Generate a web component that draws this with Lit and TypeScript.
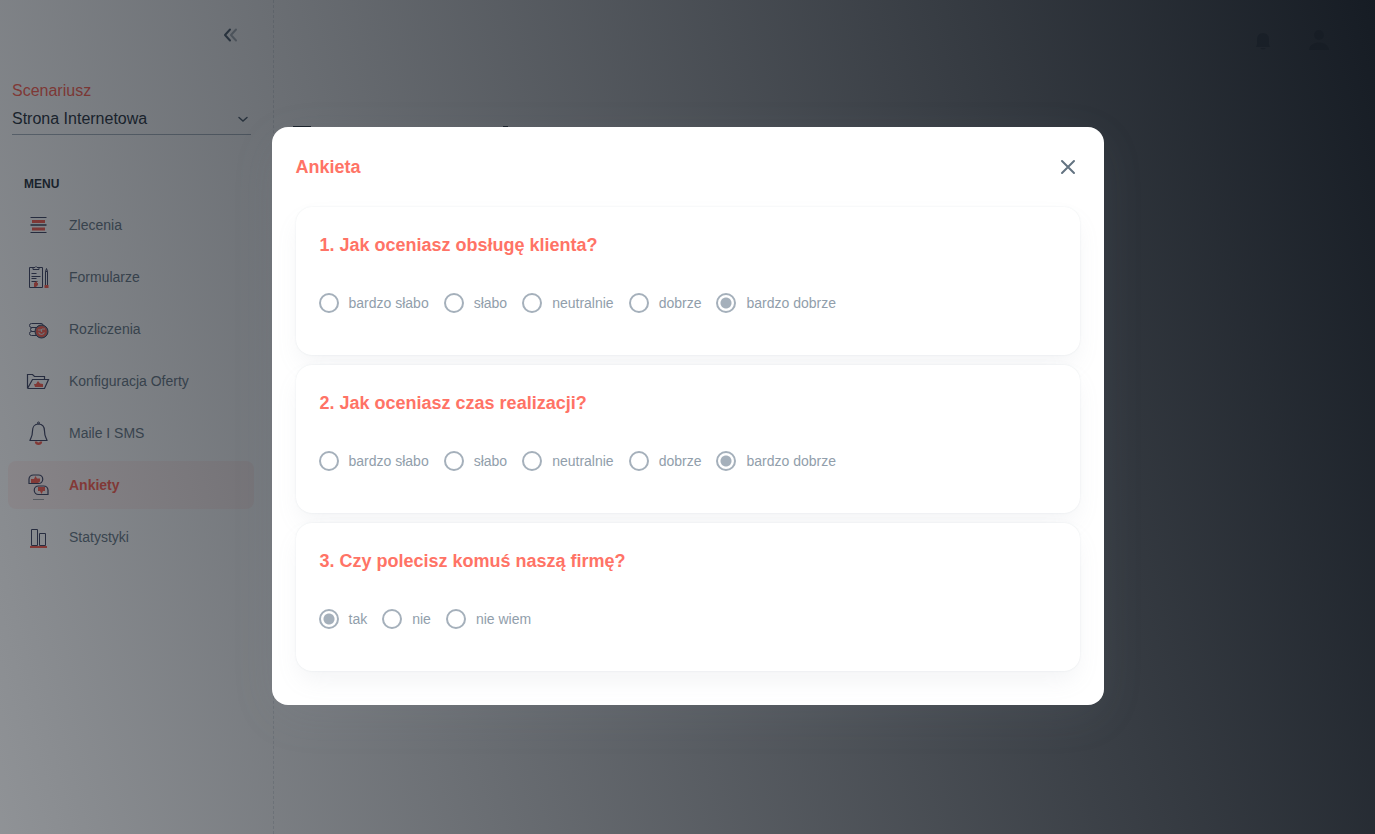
import { LitElement, html, svg, css } from "lit";
import { customElement, state } from "lit/decorators.js";
import { classMap } from "lit/directives/class-map.js";

const INK = "#3a3f5e";
const RED = "#f9594a";

const icons = {
  orders: svg`<g fill="none"><path stroke="${INK}" d="M4.500 4.500h16M4.500 19.500h16" /><path stroke="#697080" stroke-width="2" d="M4.500 12h16" /><path stroke="${RED}" stroke-width="3" d="M6 8.500h13M6 16h13" /></g>`,
  forms: svg`<g fill="none" stroke="${INK}"><path d="M8 2.500H3.500v20h13v-20H12M7 4.500h6v-2h-2l-1-1-1 1H7zM5.500 8.500h5M5.500 11.500h9M5.500 13.500h5M5.500 16.500h6" /><path d="M19.500 20V6.500l1-3 1 3V20M19.500 6.500h2" /><path fill="${RED}" stroke="none" d="M18.500 20h4v3h-4zM8 18l3-2v2h1v2l-2 2H8z" /></g>`,
  billing: svg`<g fill="none" stroke="${INK}"><path d="M15 6.500H5.500a1.800 1.800 0 0 0 0 4H10M10 10.500H6.500a2 2 0 0 0 0 4h3M9 14.500H5.500a2 2 0 0 0 0 4H11M15 6.500q2 0 2 1.500" /><circle cx="15.500" cy="14.500" r="6.500" fill="#7b7f86" /><circle cx="15.500" cy="14.500" r="5.500" fill="${RED}" stroke="none" /></g><g fill="none" stroke="#d8dadd" stroke-width="1.200"><path d="M12 13h3M16 12h3M12.500 15.500q3 4 6 0M15.500 12v3" /></g>`,
  offer: svg`<g fill="none" stroke="${INK}" stroke-width="1.200"><path d="M1.500 19.500v-14h5l2 2h10v3M1.500 19.500h17l4-9H6.500l-5 9" /><path fill="${RED}" stroke="none" d="M8 15h2l2-3 2 2.500 3 .5v3H9z" /></g>`,
  bell: svg`<path fill="none" stroke="${INK}" stroke-width="1.200" d="M12.500 3c-4 0-6 3-6 7 0 6-2 7-2.500 9.500h17c-.5-2.500-2.500-3.500-2.500-9.500 0-4-2-7-6-7z" /><circle cx="12.500" cy="2" r="1" fill="none" stroke="${INK}" /><path d="M10 20.500c0 3 5 3 5 0" fill="none" stroke="${RED}" stroke-width="2.400" />`,
  survey: svg`<g fill="none" stroke="${INK}" stroke-width="1.200"><path d="M3 10.500V6a4.500 4.500 0 0 1 4.500-4h5a4.200 4.200 0 0 1 0 8.500zM22 21.500V17a4.500 4.500 0 0 0-4.500-4h-5a4.200 4.200 0 0 0 0 8.500z" /></g><g fill="${RED}"><path d="M5 6h3l1.500-3L11 5.500h3v3L12 10H5zM12 14h7v4h-2l-1.500 3-1.500-3h-2z" /></g><path d="M7 26.500h11" stroke="#9a9ea2" />`,
  stats: svg`<g fill="none" stroke="${INK}"><path d="M5.500 20.500v-16h6v16zM13.500 20.500v-12h6v12z" /><path stroke="${RED}" stroke-width="2" d="M4 22h17" /></g>`,
};

const menu = [
  { label: "Zlecenia", icon: icons.orders },
  { label: "Formularze", icon: icons.forms },
  { label: "Rozliczenia", icon: icons.billing },
  { label: "Konfiguracja Oferty", icon: icons.offer },
  { label: "Maile I SMS", icon: icons.bell },
  { label: "Ankiety", icon: icons.survey, active: true },
  { label: "Statystyki", icon: icons.stats },
];

const scale = ["bardzo słabo", "słabo", "neutralnie", "dobrze", "bardzo dobrze"];

@customElement("side-nav")
class SideNav extends LitElement {
  static styles = css`
    :host { display: block; box-sizing: border-box; width: 274px; border-right: 1px dashed rgba(145, 158, 171, 0.3); }
    .top { display: flex; justify-content: flex-end; padding: 23px 30px 0 0; }
    .collapse { display: flex; padding: 0; border: 0; background: none; color: #475767; cursor: pointer; }
    .scenario { display: flex; flex-direction: column; margin: 32px 22px 0 12px; font-size: 16px; }
    .caption { color: #ff5b4c; line-height: 24px; }
    .field { display: grid; align-items: center; height: 30px; padding-bottom: 1px; border-bottom: 1px solid #a3afba; }
    .field > * { grid-area: 1 / 1; }
    .select { appearance: none; width: 100%; padding: 0; border: 0; background: none; color: #212b36; font: inherit; }
    .arrow { justify-self: end; pointer-events: none; color: #475767; }
    .heading { margin: 39px 24px 7px; font-size: 12px; line-height: 20px; font-weight: 700; color: #212b36; }
    .list { display: flex; flex-direction: column; gap: 4px; margin: 0; padding: 0 19px 0 8px; list-style: none; }
    .item { display: flex; align-items: center; gap: 18px; height: 48px; padding-left: 18px; border-radius: 8px; color: #637381; font-size: 14px; text-decoration: none; }
    .item.active { background: rgba(255, 91, 76, 0.08); color: #ff5b4c; font-weight: 700; }
    .icon { overflow: visible; }
  `;
  render() {
    return html`
      <div class="top">
        <button class="collapse" aria-label="Zwiń menu">
          <svg width="24" height="24" viewBox="0 0 24 24" fill="none" stroke="currentColor" stroke-width="2" stroke-linecap="round" stroke-linejoin="round"><path d="M11 6.500 6 12l5 5.500" /><path opacity=".48" d="M17 6.500 12 12l5 5.500" /></svg>
        </button>
      </div>
      <div class="scenario">
        <label class="caption" for="scenario">Scenariusz</label>
        <div class="field">
          <select class="select" id="scenario"><option>Strona Internetowa</option></select>
          <svg class="arrow" width="16" height="16" viewBox="0 0 16 16" fill="none" stroke="currentColor" stroke-width="1.500" stroke-linecap="round"><path d="m4 7.500 4 3.500 4-3.500" /></svg>
        </div>
      </div>
      <nav>
        <div class="heading">MENU</div>
        <ul class="list">
          ${menu.map((m) => html`<li><a href="#" class=${classMap({ item: true, active: !!m.active })}><svg class="icon" width="25" height="24" viewBox="0 0 25 24">${m.icon}</svg>${m.label}</a></li>`)}
        </ul>
      </nav>
    `;
  }
}

@customElement("survey-question")
class SurveyQuestion extends LitElement {
  static properties = { text: {}, options: { attribute: false }, selected: {}, group: {} };
  declare text: string;
  declare options: string[];
  declare selected: string;
  declare group: string;
  static styles = css`
    :host { display: block; }
    .card { padding: 24px 23px 40px; border-radius: 16px; background: #fff; box-shadow: 0 0 2px rgba(145, 158, 171, 0.2), 0 12px 24px -4px rgba(145, 158, 171, 0.12); }
    .title { margin: 0 1px; font-size: 18px; line-height: 28px; font-weight: 700; color: #ff7366; }
    .options { display: flex; flex-wrap: wrap; gap: 15px; margin-top: 32px; }
    .option { display: flex; align-items: center; gap: 10px; height: 24px; font-size: 14px; color: #919eab; }
    .radio { appearance: none; box-sizing: border-box; width: 20px; height: 20px; margin: 0; border: 2px solid #a5b0bb; border-radius: 50%; }
    .radio:checked { background: radial-gradient(circle, #a5b0bb 5px, transparent 6px); }
  `;
  render() {
    return html`
      <section class="card" role="radiogroup" aria-labelledby="title">
        <h3 class="title" id="title">${this.text}</h3>
        <div class="options">
          ${this.options.map((o) => html`<label class="option"><input class="radio" type="radio" name=${this.group} .checked=${o === this.selected} />${o}</label>`)}
        </div>
      </section>
    `;
  }
}

@customElement("app-root")
class AppRoot extends LitElement {
  @state() private questions = [
    { text: "1. Jak oceniasz obsługę klienta?", options: scale, selected: "bardzo dobrze" },
    { text: "2. Jak oceniasz czas realizacji?", options: scale, selected: "bardzo dobrze" },
    { text: "3. Czy polecisz komuś naszą firmę?", options: ["tak", "nie", "nie wiem"], selected: "tak" },
  ];
  static styles = css`
    :host { display: grid; min-height: 100vh; background: #fff; font-family: "Liberation Sans", Arial, sans-serif; }
    .page, .backdrop { grid-area: 1 / 1; }
    .page { display: flex; }
    .main { flex: 1; }
    .header { display: flex; justify-content: flex-end; align-items: center; gap: 26px; padding: 20px 36px 0 0; color: #637381; }
    .marks { display: block; margin: 66px 0 0 19px; }
    .backdrop { z-index: 1; display: flex; align-items: center; justify-content: center; background: linear-gradient(75deg, rgba(22, 28, 36, 0.48), #161c24); }
    .dialog { box-sizing: border-box; width: min(832px, calc(100% - 64px)); margin-bottom: 2px; padding: 24px 24px 34px; border-radius: 16px; background: #fff; box-shadow: 0 12px 48px -4px rgba(145, 158, 171, 0.1); }
    .bar { display: flex; align-items: center; justify-content: space-between; margin-bottom: 24px; }
    .name { margin: 0; font-size: 18px; line-height: 32px; font-weight: 700; color: #ff7366; }
    .close { display: flex; padding: 0; border: 0; background: none; color: #637381; cursor: pointer; }
    .questions { display: flex; flex-direction: column; gap: 10px; }
  `;
  render() {
    return html`
      <div class="page">
        <side-nav></side-nav>
        <main class="main">
          <header class="header">
            <svg width="20" height="40" viewBox="0 0 20 40" fill="currentColor"><path d="M10 13c-4 0-6 3-6 6v5l-1 3h14l-1-3v-5c0-3-2-6-6-6zM7 28h6q-3 3-6 0" /></svg>
            <svg width="40" height="40" viewBox="0 0 40 40" fill="#454f5b"><circle cx="20" cy="15" r="5" /><path d="M10 30c0-10 20-10 20 0z" /></svg>
          </header>
          <svg class="marks" width="216" height="2" viewBox="0 0 216 2" fill="#212b36" aria-hidden="true"><path d="M0 0h18v2H0zM210 0h5v2h-5z" /></svg>
        </main>
      </div>
      <div class="backdrop">
        <section class="dialog" role="dialog" aria-modal="true" aria-labelledby="name">
          <div class="bar">
            <h2 class="name" id="name">Ankieta</h2>
            <button class="close" aria-label="Zamknij">
              <svg width="24" height="24" viewBox="0 0 24 24" fill="none" stroke="currentColor" stroke-width="2" stroke-linecap="round"><path d="m6 6 12 12M18 6 6 18" /></svg>
            </button>
          </div>
          <div class="questions">
            ${this.questions.map((q, i) => html`<survey-question .text=${q.text} .options=${q.options} .selected=${q.selected} .group=${"q" + i}></survey-question>`)}
          </div>
        </section>
      </div>
    `;
  }
}
